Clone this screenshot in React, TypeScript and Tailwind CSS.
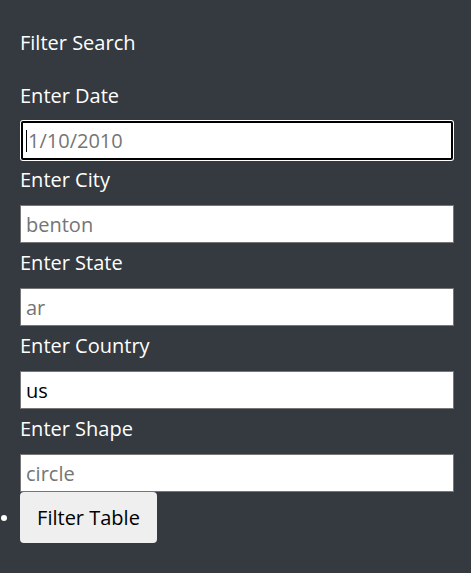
const fields = [
  { label: "Enter Date", placeholder: "1/10/2010", focused: true },
  { label: "Enter City", placeholder: "benton" },
  { label: "Enter State", placeholder: "ar" },
  { label: "Enter Country", value: "us" },
  { label: "Enter Shape", placeholder: "circle" },
]

type Field = {
  label: string
  placeholder?: string
  value?: string
  focused?: boolean
}

function FilterField({ label, placeholder, value, focused }: Field) {
  return (
    <li className="flex flex-col">
      <label className="pt-[5px] pb-[10px] text-[20px] leading-[30px] text-white">{label}</label>
      {focused ? (
        <div className="flex h-[39px] w-[432px] items-center self-start ml-px rounded-[2px] border-2 border-black bg-white ring-1 ring-white">
          <span className="ml-[3px] h-[22px] w-px bg-black" />
          <input
            className="h-full min-w-0 flex-1 bg-transparent pl-[1px] text-[20px] text-black outline-none placeholder:text-[#757575]"
            placeholder={placeholder}
            readOnly
          />
        </div>
      ) : (
        <input
          className="h-[38px] w-[434px] border border-[#767676] bg-white px-[5px] text-[20px] text-black outline-none placeholder:text-[#757575]"
          placeholder={placeholder}
          defaultValue={value}
          readOnly
        />
      )}
    </li>
  )
}

export default function App() {
  return (
    <div
      className="min-h-[573px] w-full bg-[#343a40] pt-[28px] pl-[20px]"
      style={{ fontFamily: '"Open Sans", "Noto Sans", sans-serif' }}
    >
      <h5 className="mb-[18px] text-[20px] leading-[30px] text-white">Filter Search</h5>
      <ul className="flex flex-col">
        {fields.map((f) => (
          <FilterField key={f.label} {...f} />
        ))}
        <li className="-ml-[20px] flex items-center">
          <span className="ml-[1px] mr-[13px] h-[6px] w-[6px] rounded-full bg-white" />
          <button className="h-[51px] w-[137px] rounded-[4px] bg-[#efefef] text-[20px] text-black">
            Filter Table
          </button>
        </li>
      </ul>
    </div>
  )
}
